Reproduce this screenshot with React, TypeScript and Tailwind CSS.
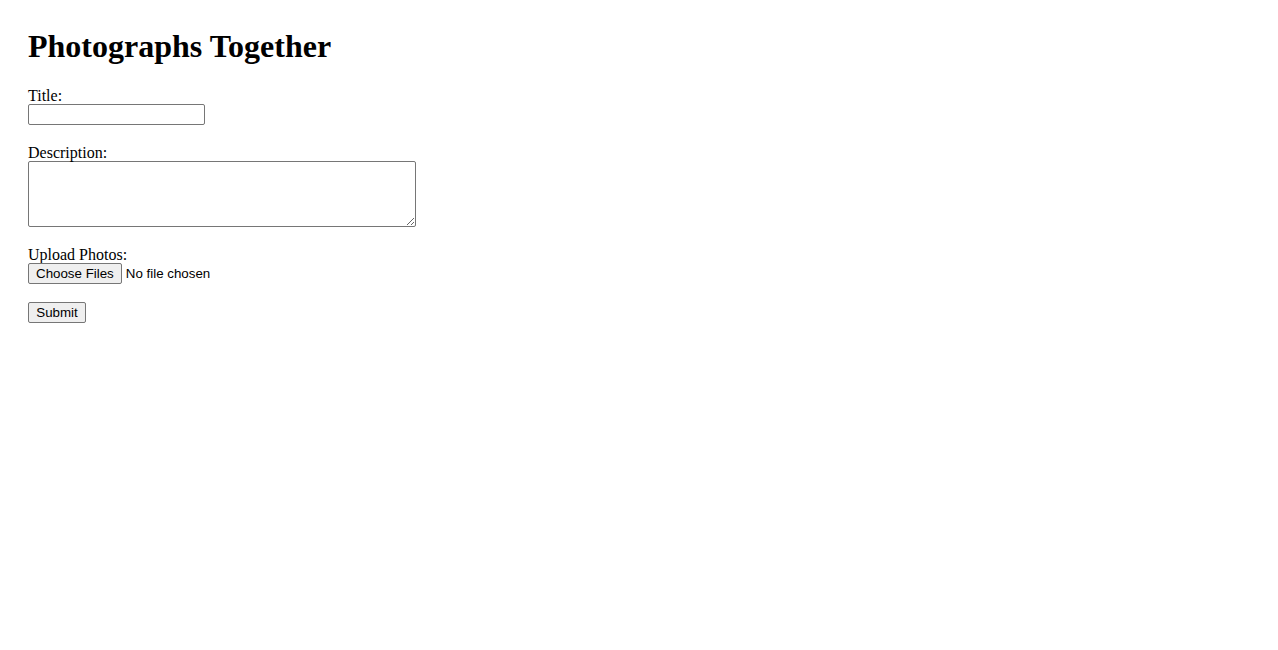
import React from "react"

const serif = "font-['Liberation_Serif','Times_New_Roman',serif]"
const sans = "font-['Liberation_Sans',Arial,sans-serif]"

export default function App() {
  return (
    <div className={`min-h-[650px] bg-white text-black ${serif} pl-[28px] pt-[28px]`}>
      <h1 className="text-[32px] leading-[37px] font-bold mb-[20px]">Photographs Together</h1>

      <form onSubmit={(e) => e.preventDefault()}>
        {/* Title */}
        <div className="mb-[18px]">
          <label htmlFor="title" className="block text-[16px] leading-[17px] pt-[2px]">
            Title:
          </label>
          <input
            id="title"
            type="text"
            className={`block w-[177px] h-[21px] px-[2px] py-[1px] border border-[#767676] rounded-[2px] bg-white text-[13.333px] ${sans}`}
          />
        </div>

        {/* Description */}
        <div className="mb-[17px]">
          <label htmlFor="description" className="block text-[16px] leading-[17px] pt-[1px]">
            Description:
          </label>
          <textarea
            id="description"
            className="block w-[388px] h-[66px] p-[2px] border border-[#767676] rounded-[2px] bg-white text-[13.333px] font-['Liberation_Mono',monospace]"
          />
        </div>

        {/* Photos */}
        <div className="mb-[18px]">
          <label htmlFor="photos" className="block text-[16px] leading-[17px] pt-[2px]">
            Upload Photos:
          </label>
          <input
            id="photos"
            type="file"
            multiple
            className={`block h-[21px] text-[13.333px] leading-[19px] ${sans} file:h-[21px] file:bg-[#efefef] file:border file:border-solid file:border-[#767676] file:rounded-[2px] file:px-[7px] file:py-0 file:mr-[4px] file:text-black`}
          />
        </div>

        <button
          type="submit"
          className={`block h-[21px] w-[58px] bg-[#efefef] border border-[#767676] rounded-[2px] text-[13.333px] leading-[17px] text-black text-center ${sans}`}
        >
          Submit
        </button>
      </form>
    </div>
  )
}
